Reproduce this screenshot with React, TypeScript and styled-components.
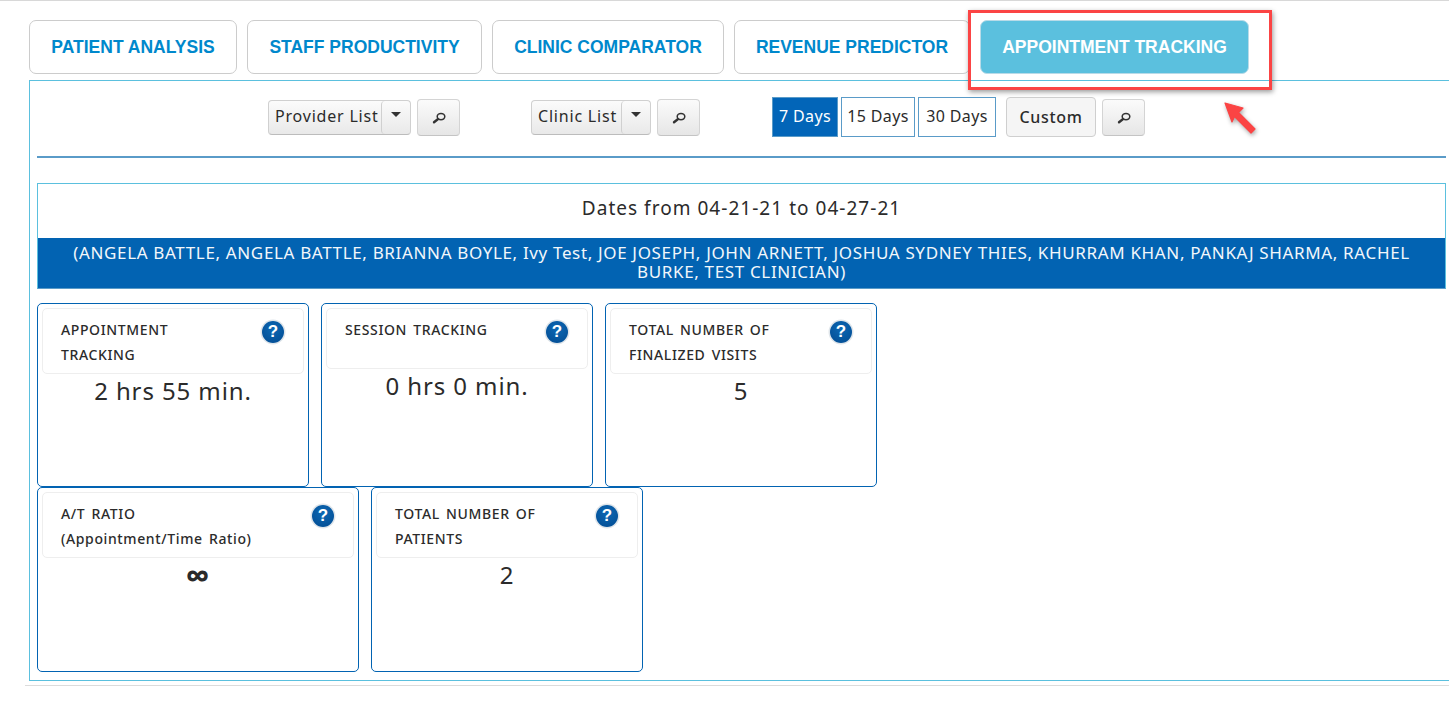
import React from "react";
import styled, { createGlobalStyle } from "styled-components";

const Global = createGlobalStyle`
  html, body { margin: 0; padding: 0; background: #fff; height: 726px; overflow: hidden; }
  body { font-family: "Noto Sans", "Open Sans", sans-serif; color: #2b2b2b; }
`;

const Page = styled.div`
  position: relative;
  width: 1449px;
  height: 726px;
  overflow: hidden;
  box-sizing: border-box;
  border-top: 1px solid #d8d8d8;
  padding: 19px 0 0 29px;
`;

const Tabs = styled.div`
  display: flex;
  gap: 10px;
`;

const Tab = styled.div<{ $width: number; $active?: boolean }>`
  box-sizing: border-box;
  width: ${(p) => p.$width}px;
  height: 54px;
  display: flex;
  align-items: center;
  justify-content: center;
  border: 1px solid ${(p) => (p.$active ? "#b9dbe8" : "#cccccc")};
  border-radius: 7px;
  background: ${(p) => (p.$active ? "#5bc0de" : "#fff")};
  color: ${(p) => (p.$active ? "#fff" : "#0088cc")};
  font: bold 17.5px "Liberation Sans", Arial, sans-serif;
`;

const Panel = styled.div`
  box-sizing: border-box;
  width: 1440px;
  height: 601px;
  margin-top: 6px;
  border: 1px solid #5bc0de;
  border-right: none;
  padding: 0 0 0 7px;
`;

const Toolbar = styled.div`
  box-sizing: border-box;
  width: 1409px;
  height: 77px;
  border-bottom: 2px solid #5a9bc8;
  display: flex;
  align-items: flex-start;
  padding: 16px 0 0 231px;
`;

const Group = styled.div<{ $width: number }>`
  display: flex;
  align-items: center;
  width: ${(p) => p.$width}px;
  height: 40px;
  flex: none;
`;

const Combo = styled.div<{ $width: number }>`
  box-sizing: border-box;
  width: ${(p) => p.$width}px;
  height: 35px;
  flex: none;
  display: flex;
  align-items: stretch;
  border: 1px solid #d0d0d0;
  border-bottom-color: #bcbcbc;
  border-radius: 4px;
  background: linear-gradient(#fbfbfb, #e9e9e9);
  font-size: 16px;
  letter-spacing: 0.8px;
`;

const ComboLabel = styled.span`
  flex: 1;
  display: flex;
  align-items: center;
  padding: 0 0 3px 6px;
  white-space: nowrap;
`;

const ComboArrow = styled.span`
  box-sizing: border-box;
  width: 29px;
  display: flex;
  justify-content: center;
  padding-top: 11px;
  border-left: 1px solid #d0d0d0;
  border-radius: 4px;
  &::before {
    content: "";
    width: 0;
    height: 0;
    border-left: 5px solid transparent;
    border-right: 5px solid transparent;
    border-top: 5px solid #333;
  }
`;

const SearchButton = styled.button`
  box-sizing: border-box;
  width: 43px;
  height: 37px;
  margin-left: 6px;
  padding: 2px 0 0;
  flex: none;
  display: flex;
  align-items: center;
  justify-content: center;
  border: 1px solid #d4d4d4;
  border-bottom-color: #c4c4c4;
  border-radius: 4px;
  background: linear-gradient(#fbfbfb, #e6e6e6);
`;

const DayButton = styled.div<{ $width: number; $active?: boolean }>`
  box-sizing: border-box;
  width: ${(p) => p.$width}px;
  height: 40px;
  margin-right: 3px;
  padding-bottom: 2px;
  display: flex;
  align-items: center;
  justify-content: center;
  border: 1px solid #5a9bc8;
  background: ${(p) => (p.$active ? "#0265b8" : "#fff")};
  color: ${(p) => (p.$active ? "#fff" : "#2b2b2b")};
  font-size: 16px;
  letter-spacing: 0.4px;
`;

const CustomButton = styled.div`
  box-sizing: border-box;
  width: 90px;
  height: 40px;
  margin-left: 7px;
  padding-bottom: 1px;
  display: flex;
  align-items: center;
  justify-content: center;
  border: 1px solid #cfcfcf;
  border-radius: 4px;
  background: #f5f5f5;
  font-size: 16px;
  font-weight: 500;
  letter-spacing: 0.7px;
`;

const DateBox = styled.div`
  box-sizing: border-box;
  width: 1409px;
  height: 106px;
  margin-top: 25px;
  border: 1px solid #5bc0de;
  border-bottom-color: #5a9bc8;
  display: flex;
  flex-direction: column;
`;

const DateTitle = styled.div`
  height: 54px;
  padding-bottom: 6px;
  box-sizing: border-box;
  display: flex;
  align-items: center;
  justify-content: center;
  font-size: 19px;
  letter-spacing: 1.03px;
`;

const Names = styled.div`
  flex: 1;
  box-sizing: border-box;
  padding: 5px 20px 0;
  background: #0263b2;
  color: #f2f7fb;
  font-size: 17px;
  line-height: 19px;
  letter-spacing: 0.65px;
  text-align: center;
`;

const CardRow = styled.div<{ $top: number; $height: number }>`
  display: flex;
  gap: 12px;
  height: ${(p) => p.$height}px;
  margin-top: ${(p) => p.$top}px;
`;

const Card = styled.div<{ $width: number }>`
  box-sizing: border-box;
  width: ${(p) => p.$width}px;
  padding: 4px;
  border: 1px solid #0263b2;
  border-radius: 5px;
`;

const CardHead = styled.div<{ $short?: boolean }>`
  box-sizing: border-box;
  height: ${(p) => (p.$short ? 61 : 66)}px;
  display: flex;
  justify-content: space-between;
  align-items: flex-start;
  padding: 8px 19px 0 18px;
  border: 1px solid #eeeeee;
  border-radius: 5px;
`;

const CardTitle = styled.div`
  font-size: 14px;
  font-weight: 500;
  line-height: 25px;
  letter-spacing: 0.62px;
  word-spacing: 2px;
  color: #2b2b2b;
`;

const Help = styled.span`
  width: 22px;
  height: 22px;
  margin-top: 4px;
  flex: none;
  display: flex;
  align-items: center;
  justify-content: center;
  border-radius: 50%;
  background: radial-gradient(circle at 50% 35%, #0c68b4, #024a90);
  box-shadow: 0 0 0 1.5px #dfe5ea;
  color: #fff;
  font: bold 17px "Liberation Sans", Arial, sans-serif;
`;

const Value = styled.div<{ $glyph?: boolean }>`
  margin-top: 1px;
  height: 32px;
  text-align: center;
  font-size: ${(p) => (p.$glyph ? 34 : 24)}px;
  line-height: 32px;
  letter-spacing: 0.9px;
  font-weight: ${(p) => (p.$glyph ? 700 : 400)};
`;

const Footer = styled.div`
  width: 1424px;
  height: 0;
  margin: 4px 0 0 -4px;
  border-top: 1px solid #dcdcdc;
`;

const Highlight = styled.div`
  position: absolute;
  left: 968px;
  top: 9px;
  width: 304px;
  height: 80px;
  box-sizing: border-box;
  border: 3px solid #fb4444;
  box-shadow: 1px 2px 5px rgba(0, 0, 0, 0.4);
`;

const Arrow = styled.svg`
  position: absolute;
  left: 1220px;
  top: 97px;
  filter: drop-shadow(1px 2px 2px rgba(0, 0, 0, 0.35));
`;

const Lens = () => (
  <svg width="14" height="12" viewBox="0 0 14 12" fill="none">
    <ellipse cx="9" cy="4.6" rx="3.8" ry="3.2" stroke="#333" strokeWidth="1.5" />
    <path d="M5.8 7.2 L2 10.2" stroke="#333" strokeWidth="2.4" strokeLinecap="round" />
  </svg>
);

const Metric = ({ width, title, value, short, glyph }: { width: number; title: React.ReactNode; value: string; short?: boolean; glyph?: boolean }) => (
  <Card $width={width}>
    <CardHead $short={short}>
      <CardTitle>{title}</CardTitle>
      <Help>?</Help>
    </CardHead>
    <Value $glyph={glyph}>{value}</Value>
  </Card>
);

export default function App() {
  return (
    <Page>
      <Global />
      <Tabs>
        <Tab $width={208}>PATIENT ANALYSIS</Tab>
        <Tab $width={235}>STAFF PRODUCTIVITY</Tab>
        <Tab $width={232}>CLINIC COMPARATOR</Tab>
        <Tab $width={236}>REVENUE PREDICTOR</Tab>
        <Tab $width={269} $active>APPOINTMENT TRACKING</Tab>
      </Tabs>
      <Panel>
        <Toolbar>
          <Group $width={263}>
            <Combo $width={143}><ComboLabel>Provider List</ComboLabel><ComboArrow /></Combo>
            <SearchButton aria-label="Search"><Lens /></SearchButton>
          </Group>
          <Group $width={241}>
            <Combo $width={120}><ComboLabel>Clinic List</ComboLabel><ComboArrow /></Combo>
            <SearchButton aria-label="Search"><Lens /></SearchButton>
          </Group>
          <Group $width={380}>
            <DayButton $width={66} $active>7 Days</DayButton>
            <DayButton $width={74}>15 Days</DayButton>
            <DayButton $width={78}>30 Days</DayButton>
            <CustomButton>Custom</CustomButton>
            <SearchButton aria-label="Search"><Lens /></SearchButton>
          </Group>
        </Toolbar>
        <DateBox>
          <DateTitle>Dates from 04-21-21 to 04-27-21</DateTitle>
          <Names>(ANGELA BATTLE, ANGELA BATTLE, BRIANNA BOYLE, Ivy Test, JOE JOSEPH, JOHN ARNETT, JOSHUA SYDNEY THIES, KHURRAM KHAN, PANKAJ SHARMA, RACHEL BURKE, TEST CLINICIAN)</Names>
        </DateBox>
        <CardRow $top={14} $height={184}>
          <Metric width={272} title={<>APPOINTMENT<br />TRACKING</>} value="2 hrs 55 min." />
          <Metric width={272} short title="SESSION TRACKING" value="0 hrs 0 min." />
          <Metric width={272} title={<>TOTAL NUMBER OF<br />FINALIZED VISITS</>} value="5" />
        </CardRow>
        <CardRow $top={0} $height={185}>
          <Metric width={322} title={<>A/T RATIO<br />(Appointment/Time Ratio)</>} value="∞" glyph />
          <Metric width={272} title={<>TOTAL NUMBER OF<br />PATIENTS</>} value="2" />
        </CardRow>
      </Panel>
      <Footer />
      <Highlight />
      <Arrow width="40" height="46" viewBox="0 0 40 46" fill="none">
        <path d="M5 5 L23 10 L18.5 14.5 L35 31 L31 35 L14.5 18.5 L12 24 Z" fill="#fb4444" stroke="#fb4444" strokeWidth="1.2" strokeLinejoin="round" />
      </Arrow>
    </Page>
  );
}
